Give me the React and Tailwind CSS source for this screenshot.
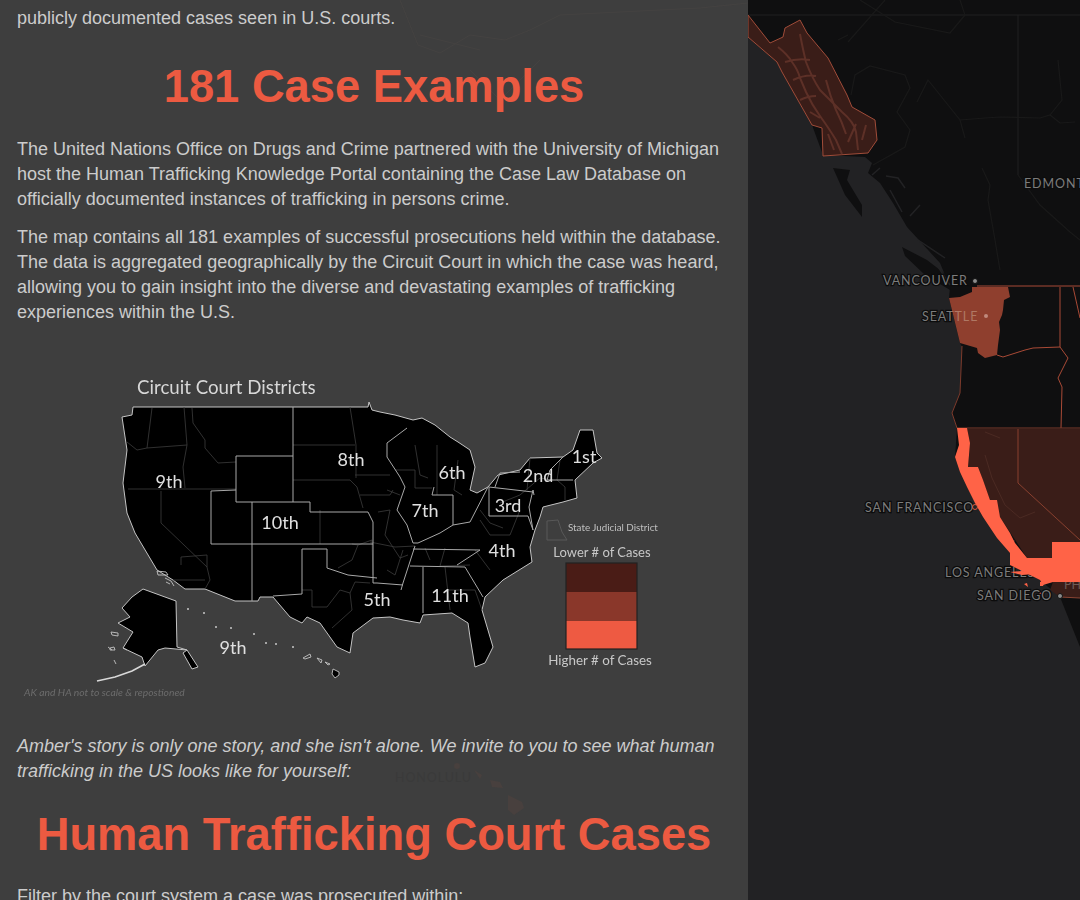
import React from 'react'

const sans = "font-['Liberation_Sans',Arial,sans-serif]"

const usOutline = 'M133 407 L368 407 L369 402 L372 410 L380 412 L395 415 L413 420 L422 418 L435 425 L450 437 L458 442 L470 450 L475 467 L470 490 L477 493 L488 487 L498 475 L520 470 L530 458 L563 457 L573 450 L580 430 L593 430 L597 453 L602 458 L593 463 L575 480 L577 498 L563 502 L543 507 L540 517 L535 530 L530 547 L532 562 L503 580 L485 597 L482 610 L493 647 L485 663 L475 667 L470 637 L468 623 L452 613 L423 615 L420 623 L403 620 L390 617 L373 618 L353 633 L350 653 L337 647 L320 623 L307 617 L302 623 L290 617 L273 597 L260 597 L258 601 L235 601 L205 589 L185 589 L173 580 L157 570 L135 533 L127 513 L123 483 L127 450 L122 417 L132 415 Z'

const circuitLines = [
  'M293 407 L293 502 L310 502 L310 512 L368 512 L373 522 L373 583 L377 583 L403 585',
  'M236 456 L293 456 M236 456 L236 502 L293 502',
  'M211 491 L236 490 M211 491 L211 544 L373 544',
  'M252 502 L252 601',
  'M302 549 L327 549 L327 568 L348 575 L377 578 M302 549 L302 594 L273 596',
  'M407 428 L387 443 L387 457 L400 477 L405 487 L397 510 L407 525 L413 543 L418 543 L440 533 L453 525 L453 495 L432 495 L434 487',
  'M415 546 L403 583 L401 590 M410 566 L465 567 L483 597 M423 567 L423 613',
  'M413 549 L480 550 M457 565 L480 550 M453 525 L470 522 L488 487',
  'M489 487 L489 516 L528 516 L533 530 L529 507 L533 490 L534 495 M489 487 L533 492',
  'M495 487 L500 473 L520 472 M547 480 L550 470 L563 457 M547 480 L573 480',
]

const stateLines = [
  'M152 408 L147 448 L137 450 L127 442 M147 448 L187 445 L183 467 L185 488',
  'M184 407 L187 445 M192 408 L193 423 L205 440 L205 448 L218 463 L236 462',
  'M128 489 L236 489 M161 491 L161 523 L207 567 L210 580 L205 589 M207 567 L207 555 L181 557 L181 565 M173 580 L205 580',
  'M293 445 L355 445 M293 480 L350 480 L357 487 L363 508 M350 407 L356 445 L356 478',
  'M355 475 L390 475 M360 495 L390 495 L393 490 M320 510 L320 544',
  'M352 544 L358 545 L352 560 L338 568 M358 545 L372 540 L373 575',
  'M302 590 L312 590 L312 607 L327 607 L340 590 L350 593 L355 582 L370 583 M350 593 L352 610 L332 628',
  'M395 470 L415 470 L415 488 L432 488 M437 445 L437 495 M415 445 L420 475 L428 478',
  'M370 542 L395 547 L415 546 M387 490 L400 495 M378 512 L390 510 L385 535 L400 558 L408 555',
  'M387 570 L395 575 L403 550 M425 548 L430 560 M445 548 L440 566 L470 565',
  'M480 520 L490 535 L510 535 L520 510 M475 550 L490 570 M445 567 L450 610 M447 590 L475 590 L482 610',
  'M500 503 L520 495 L540 478 L553 480 M530 458 L527 490 M560 460 L557 480 L565 487 L565 500',
  'M480 510 L490 523 L503 528 M458 460 L454 490 L462 495',
]

const usLabels = [
  ['9th', 169, 488], ['8th', 351, 466], ['10th', 280, 529], ['5th', 377, 606], ['9th', 233, 654],
  ['6th', 452, 479], ['7th', 425, 517], ['2nd', 538, 482], ['1st', 584, 463], ['3rd', 508, 512],
  ['4th', 502, 557], ['11th', 450, 602],
]

const waPath = 'M972 287 L1008 287 L1010 297 L1004 300 L1003 310 L1002 315 L999 322 L1000 330 L998 345 L997 355 L985 358 L978 353 L977 348 L960 343 L949 298 L960 297 L972 292 Z'

function CircuitMap() {
  return (
    <svg viewBox="20 370 650 340" className="block w-[650px] h-[340px] ml-[3px] blur-[0.5px]" fontFamily="Lato, sans-serif">
      <text x="137" y="394" fontSize="18.7" fill="#d8d8d8">Circuit Court Districts</text>
      <path d={usOutline} fill="#000" stroke="#c4c4c4" strokeWidth="1" strokeLinejoin="round" />
      <path d={stateLines.join(' ')} fill="none" stroke="#3c3c3c" strokeWidth="0.8" />
      <path d={circuitLines.join(' ')} fill="none" stroke="#a8a8a8" strokeWidth="1" />
      <path d="M143 589 L176 601 L177 647 L187 650 L165 648 L158 650 L145 666 L142 657 L123 648 L133 632 L118 623 L130 617 L122 608 L132 597 Z" fill="#000" stroke="#c4c4c4" strokeWidth="1" strokeLinejoin="round" />
      <path d="M183 653 L187 650 L198 667 L192 669 Z" fill="#000" stroke="#c4c4c4" strokeWidth="1" />
      <path d="M145 664 L132 671 L115 677 L97 681" fill="none" stroke="#d8d8d8" strokeWidth="1.6" />
      <path d="M111 632 L118 633 L118 636 L112 635 Z M110 648 L114 647 L115 650 L110 650 Z M114 660 L116 664 M108 647 L112 650 M123 648 L127 650" fill="none" stroke="#c4c4c4" strokeWidth="0.9" />
      <path d="M157 571 L166 572 L168 575 L158 575 Z M165 578 L171 581 L174 586 M166 582 L170 584" fill="none" stroke="#c4c4c4" strokeWidth="0.9" />
      <g fill="#c8c8c8">
        {[[188, 609], [204, 613], [216, 627], [231, 628], [254, 634], [266, 643], [276, 644], [293, 647]].map(([x, y]) => (
          <circle key={x} cx={x} cy={y} r="1" />
        ))}
      </g>
      <path d="M303 658 L310 654 L311 657 L305 659 Z M317 658 L322 660 L321 663 Z M325 662 L330 664 L328 665 Z" fill="none" stroke="#c4c4c4" strokeWidth="0.9" />
      <path d="M333 669 L339 672 L339 675 L335 678 L332 674 Z" fill="#000" stroke="#c4c4c4" strokeWidth="0.9" />
      {usLabels.map(([t, x, y]) => (
        <text key={t + x} x={x} y={y} fontSize="18" fill="#e0e0e0" textAnchor="middle">{t}</text>
      ))}
      <path d="M547 521 L558 520 L562 532 L567 540 L547 540 Z" fill="none" stroke="#585858" strokeWidth="1" />
      <text x="568" y="531" fontSize="9.8" fill="#c0c0c0">State Judicial District</text>
      <text x="602" y="557" fontSize="13" fill="#c8c8c8" textAnchor="middle">Lower # of Cases</text>
      <rect x="566" y="563" width="71" height="30" fill="#4a1c16" />
      <rect x="566" y="592" width="71" height="29" fill="#8a372a" />
      <rect x="566" y="621" width="71" height="28" fill="#ee5a42" />
      <rect x="566" y="563" width="71" height="86" fill="none" stroke="#222" strokeWidth="1.2" />
      <text x="600" y="665" fontSize="13.4" fill="#c8c8c8" textAnchor="middle">Higher # of Cases</text>
      <text x="24" y="696" fontSize="10.3" fill="#6c6c6c" fontStyle="italic">AK and HA not to scale &amp; repostioned</text>
    </svg>
  )
}

function MapLabel({ x, y, children }) {
  return (
    <text x={x} y={y} fontSize="12.5" letterSpacing="0.9" fill="#7c7c7c" stroke="#0c0c0c" strokeWidth="2.5" paintOrder="stroke">{children}</text>
  )
}

function WorldMap() {
  return (
    <svg viewBox="748 0 332 900" className="block w-[332px] h-[900px]" fontFamily="Lato, sans-serif">
      <defs>
        <clipPath id="wa-clip"><path d={waPath} /></clipPath>
      </defs>
      <rect x="748" y="0" width="332" height="900" fill="#222224" />
      <path d="M748 0 L1080 0 L1080 647 L1060 597 L1040 580 L1010 565 L1010 553 L983 517 L967 487 L955 457 L957 428 L952 413 L960 393 L962 347 L960 343 L949 298 L950 287 L940 263 L907 227 L893 203 L880 183 L868 173 L872 163 L865 157 L823 155 L812 125 L782 72 L777 62 L748 37 Z" fill="#0f0f10" />
      {/* islands and inlets */}
      <path d="M833 168 L850 170 L847 180 L862 205 L862 217 L845 195 Z M902 247 L927 260 L953 280 L950 290 L925 275 L905 256 Z" fill="#0f0f10" />
      <path d="M872 175 L880 168 M886 176 L898 178 L905 188 M890 190 L902 212 M910 216 L920 205 M918 240 L945 258 M935 262 L950 285" fill="none" stroke="#222224" strokeWidth="1.5" />
      {/* rivers and borders */}
      <path d="M748 15 L1080 15 M1018 15 L1018 175" fill="none" stroke="#202020" strokeWidth="1" />
      <path d="M838 40 L848 35 M885 0 L848 42 M860 0 L895 22 L950 33 L965 15 L960 0 M851 95 L855 75 L870 66 L905 75 L910 88 L897 112 L910 130 L905 147 L873 165 M917 102 L928 80 L960 120 L965 138 M960 120 L985 118 L1000 117 L1040 118 L1050 115 L1060 123 L1075 122 M1018 175 L1040 205 L1070 232 L1080 240 M982 168 L990 185 L988 200 L995 240 L1000 270 M1058 60 L1062 100 L1050 115" fill="none" stroke="#191919" strokeWidth="1.2" />
      <MapLabel x="1024" y="188">EDMONTON</MapLabel>
      <MapLabel x="883" y="285">VANCOUVER</MapLabel>
      <circle cx="975" cy="281" r="2.5" fill="#8c8c8c" stroke="#111" />
      <MapLabel x="922" y="321">SEATTLE</MapLabel>
      <MapLabel x="865" y="512">SAN FRANCISCO</MapLabel>
      <MapLabel x="945" y="577">LOS ANGELES</MapLabel>
      {/* Alaska panhandle */}
      <path d="M748 15 L770 43 L783 37 L785 28 L800 20 L807 33 L828 58 L847 95 L852 107 L875 120 L877 140 L868 153 L823 156 L822 128 L812 125 L782 72 L777 62 L748 37 Z" fill="#3a1d18" stroke="#a04c39" strokeWidth="1" />
      <path d="M778 47 Q788 55 792 62 Q798 70 800 78 L806 92 Q812 105 820 116 Q830 130 836 140 L842 154 M800 34 Q803 50 806 62 Q812 78 820 90 Q832 102 842 112 Q854 122 856 132 L858 150 M785 62 Q798 58 810 60 M793 80 Q806 74 816 76 M826 80 Q830 96 836 110 Q842 122 846 134 M800 100 Q808 96 816 96 M828 134 L834 150 M856 124 L848 142 M810 112 L820 118 M866 125 L862 140" fill="none" stroke="#5d3027" strokeWidth="2" />
      {/* Washington */}
      <path d={waPath} fill="#8f3f2e" />
      <text x="922" y="321" fontSize="12.5" letterSpacing="0.9" fill="#b07864" clipPath="url(#wa-clip)">SEATTLE</text>
      <circle cx="986" cy="316" r="2" fill="#c08a7c" />
      {/* state borders */}
      <path d="M977 286 L1080 286 M1060 287 L1060 347 L1068 358 L1058 378 L1062 387 L1061 428 M1073 287 L1080 318 M997 355 L1003 357 L1025 350 L1033 348 L1060 347" fill="none" stroke="#a94a36" strokeWidth="1" />
      <path d="M962 346 L960 393 L952 413 L957 428 L1080 428" fill="none" stroke="#7c3a2b" strokeWidth="1" />
      {/* California and Nevada */}
      <path d="M967 429 L1080 429 L1080 585 L1053 582 L1027 558 L1000 517 L990 500 L978 467 L968 467 L970 443 Z" fill="#3a1d18" />
      <path d="M1018 429 L1018 483 L1080 540" fill="none" stroke="#88402f" strokeWidth="1" />
      <path d="M985 432 L1000 438 M985 455 L992 478 L1005 505 L1020 518 L1035 512 M1000 540 L1015 541" fill="none" stroke="#4b2a23" strokeWidth="1" />
      <path d="M1053 582 L1080 582 L1080 598 L1060 597 L1050 590 Z" fill="#3a1d18" />
      <path d="M1060 597 L1080 598" stroke="#8a4534" strokeWidth="1" />
      <text x="1064" y="589" fontSize="12.5" fill="#6d5a55">PH</text>
      <path d="M957 428 L967 428 L970 443 L968 467 L978 467 L983 480 L990 500 L997 500 L1000 517 L1010 533 L1015 543 L1027 558 L1052 558 L1052 542 L1080 542 L1080 582 L1053 582 L1043 585 L1040 580 L1010 565 L1010 553 L997 538 L983 517 L975 503 L967 487 L960 472 L955 457 L959 445 Z" fill="#ff6347" />
      <path d="M1010 572 L1022 571 L1034 574 L1022 575 Z M1024 584 L1027 583 L1028 587 Z M1040 582 L1045 581 L1043 586 L1040 586 Z M1038 591 L1043 594 L1041 596 Z" fill="#ff6347" />
      <circle cx="975" cy="507" r="2.5" fill="#222224" stroke="#ff6347" strokeWidth="0.8" />
      <MapLabel x="977" y="600">SAN DIEGO</MapLabel>
      <circle cx="1060" cy="596" r="2.5" fill="#8c8c8c" stroke="#111" />
    </svg>
  )
}

export default function App() {
  return (
    <div className={`flex h-[900px] w-[1080px] overflow-hidden bg-[#222224] ${sans}`}>
      <div className="relative w-[748px] h-[900px] shrink-0 overflow-hidden bg-[#3e3e3e] px-[17px] pt-[6px] text-[18px] leading-[25px] text-[#cccccc]">
        {/* the map shows faintly through the panel */}
        <svg viewBox="0 0 748 900" className="absolute inset-0 w-[748px] h-[900px]">
          <path d="M400 0 L418 45 L440 53 L470 35 L505 40 L530 30 L560 15 L620 12 L700 8 L748 3 M420 35 L480 50 M470 70 L500 100 L540 60" fill="none" stroke="#444241" strokeWidth="1" />
          <circle cx="457" cy="766" r="3" fill="#48403e" />
          <path d="M474 770 L482 775 L480 779 Z M490 780 L500 782 L503 788 L492 787 Z M508 795 L522 802 L524 808 L514 815 L508 810 Z" fill="#48403e" />
          <text x="395" y="782" fontSize="12.5" letterSpacing="0.9" fill="#3a3a3a" fontFamily="Lato, sans-serif">HONOLULU</text>
        </svg>
        <div className="relative">
          <p>publicly documented cases seen in U.S. courts.</p>
          <h1 className="mt-[24px] text-center text-[45.3px] leading-[64px] font-bold text-[#ec5a41]">181 Case Examples</h1>
          <p className="mt-[18px]">
            The United Nations Office on Drugs and Crime partnered with the University of Michigan host the Human Trafficking Knowledge Portal containing the Case Law Database on officially documented instances of trafficking in persons crime.
          </p>
          <p className="mt-[13px]">
            The map contains all 181 examples of successful prosecutions held within the database. The data is aggregated geographically by the Circuit Court in which the case was heard, allowing you to gain insight into the diverse and devastating examples of trafficking experiences within the U.S.
          </p>
          <div className="mt-[45px]">
            <CircuitMap />
          </div>
          <p className="mt-[24px] italic">
            Amber's story is only one story, and she isn't alone. We invite to you to see what human trafficking in the US looks like for yourself:
          </p>
          <h1 className="mt-[19px] text-center text-[45.3px] leading-[64px] font-bold text-[#ec5a41]">Human Trafficking Court Cases</h1>
          <p className="mt-[17px]">Filter by the court system a case was prosecuted within:</p>
        </div>
      </div>
      <div className="flex-1 h-[900px]">
        <WorldMap />
      </div>
    </div>
  )
}
